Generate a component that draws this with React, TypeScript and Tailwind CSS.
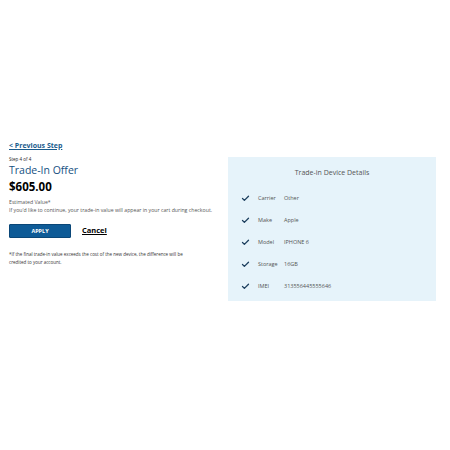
import { Check } from "lucide-react";

const details = [
  { label: "Carrier", value: "Other" },
  { label: "Make", value: "Apple" },
  { label: "Model", value: "IPHONE 6" },
  { label: "Storage", value: "16GB" },
  { label: "IMEI", value: "313556445555646" },
];

export default function App() {
  return (
    <div className="w-[450px] h-[450px] bg-white font-['Open_Sans',sans-serif] text-[#222]">
      <div className="flex pt-[140px] pl-[9px]">
        <div className="w-[219px]">
          <a className="block text-[7px] font-bold leading-[12px] text-[#1b5c8d] underline">&lt; Previous Step</a>
          <div className="mt-[4px] text-[4.5px] leading-[6px]">Step 4 of 4</div>
          <h1 className="mt-[1px] text-[10.5px] leading-[14px] text-[#15507f]">Trade-In Offer</h1>
          <div className="mt-[2px] text-[11.5px] font-bold leading-[16px] text-black">$605.00</div>
          <div className="mt-[3px] text-[5.2px] leading-[8px] text-[#555]">
            <div>Estimated Value*</div>
            <div>If you'd like to continue, your trade-in value will appear in your cart during checkout.</div>
          </div>
          <div className="mt-[10px] flex items-center gap-[11px]">
            <button className="h-[14px] w-[62px] rounded-[1px] border border-[#0a4778] bg-[#0e5b97] text-[5.5px] font-bold text-white">
              APPLY
            </button>
            <a className="text-[7.5px] font-bold text-black underline">Cancel</a>
          </div>
          <div className="mt-[12px] w-[185px] text-[4.5px] leading-[8px] text-[#333]">
            *If the final trade-in value exceeds the cost of the new device, the difference will be credited to your account.
          </div>
        </div>
        <div className="mt-[17px] h-[144px] w-[208px] bg-[#e6f3fa] pt-[10px]">
          <div className="text-center text-[7px] leading-[12px] text-[#555]">Trade-in Device Details</div>
          <div className="mt-[13px] flex flex-col gap-[10px] pl-[13px]">
            {details.map((d) => (
              <div key={d.label} className="flex h-[12px] items-center text-[5.5px] text-[#555]">
                <Check className="h-[9px] w-[9px] text-[#1d3f5e]" strokeWidth={3.5} />
                <span className="ml-[8px] w-[26px]">{d.label}</span>
                <span>{d.value}</span>
              </div>
            ))}
          </div>
        </div>
      </div>
    </div>
  );
}
